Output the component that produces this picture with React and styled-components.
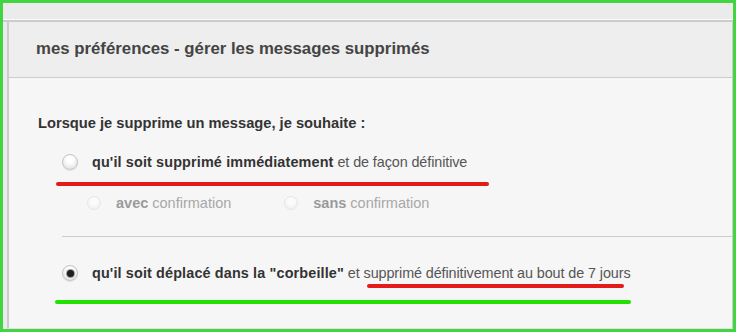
import React from "react";
import styled, { createGlobalStyle } from "styled-components";

const GlobalStyle = createGlobalStyle`
  html, body {
    margin: 0;
    padding: 0;
    background: #ebebeb;
  }
  * {
    box-sizing: border-box;
  }
`;

const Frame = styled.div`
  width: 736px;
  height: 332px;
  border: 3px solid #41d641;
  background: #ebebeb;
  display: flex;
  flex-direction: column;
  font-family: "Liberation Sans", Arial, sans-serif;
  overflow: hidden;
`;

const TopStrip = styled.div`
  height: 17px;
  flex-shrink: 0;
  background: #ebebeb;
  border-bottom: 1px solid #fafafa;
  box-shadow: 0 2px 0 #cccccc;
  margin-bottom: 2px;
`;

const Panel = styled.div`
  flex: 1;
  margin-left: 4px;
  border-left: 2px solid #cccccc;
  border-right: 1px solid #cccccc;
  border-bottom: 1px solid #e2e2e2;
  display: flex;
  flex-direction: column;
`;

const Header = styled.div`
  height: 56px;
  flex-shrink: 0;
  background: #eeeeee;
  border-bottom: 1px solid #cccccc;
  display: flex;
  align-items: center;
  padding: 0 0 1px 27px;
  h2 {
    margin: 0;
    font-size: 16.8px;
    font-weight: bold;
    color: #444444;
  }
`;

const Body = styled.div`
  flex: 1;
  background: #f6f6f6;
  padding: 37px 0 0 29px;
  display: flex;
  flex-direction: column;
`;

const Question = styled.p`
  margin: 0;
  line-height: 16px;
  font-size: 14.7px;
  font-weight: bold;
  color: #333333;
`;

const OptionRow = styled.label`
  display: flex;
  align-items: center;
  height: 20px;
  margin-top: ${(p) => p.$top}px;
  margin-left: 24px;
  gap: 14px;
  font-size: 14.4px;
  letter-spacing: -0.1px;
  color: #555555;
  b {
    color: #333333;
    letter-spacing: 0.14px;
  }
`;

const SubRow = styled.div`
  display: flex;
  align-items: center;
  height: 16px;
  margin-top: 9px;
  margin-left: 49px;
  gap: 53px;
`;

const SubOption = styled.label`
  display: flex;
  align-items: center;
  gap: 15px;
  font-size: 14.5px;
  color: #a8a8a8;
  b {
    color: #9a9a9a;
  }
`;

const Radio = styled.span`
  position: relative;
  flex-shrink: 0;
  width: ${(p) => (p.$small ? 14 : 16)}px;
  height: ${(p) => (p.$small ? 14 : 16)}px;
  border-radius: 50%;
  border: 1px solid ${(p) => (p.$disabled ? "#e6e6e6" : "#c4c4c4")};
  background: ${(p) =>
    p.$disabled
      ? "radial-gradient(circle at 50% 35%, #fbfbfb 30%, #ececec 100%)"
      : "radial-gradient(circle at 50% 35%, #ffffff 25%, #dadada 100%)"};
  box-shadow: ${(p) => (p.$disabled ? "none" : "0 1px 1px rgba(0,0,0,0.08)")};
  &::after {
    content: "";
    display: ${(p) => (p.$checked ? "block" : "none")};
    position: absolute;
    left: 50%;
    top: 50%;
    width: 7px;
    height: 7px;
    margin: -3.5px 0 0 -3.5px;
    border-radius: 50%;
    background: #1e1e1e;
    box-shadow: 0 0 0 1px #9a9a9a;
  }
`;

const Mark = styled.div`
  height: 4px;
  border-radius: 2px;
  background: ${(p) => p.$color};
  width: ${(p) => p.$width}px;
  margin-top: ${(p) => p.$top}px;
  margin-left: ${(p) => p.$left}px;
`;

const Divider = styled.hr`
  margin: 25px 0 0 24px;
  border: 0;
  border-top: 1px solid #cccccc;
  height: 0;
`;

const Underlined = styled.span`
  position: relative;
  &::after {
    content: "";
    position: absolute;
    left: 3px;
    right: 7px;
    top: calc(100% + 3px);
    height: 4px;
    border-radius: 2px;
    background: #e31b1b;
  }
`;

export default function App() {
  return (
    <>
      <GlobalStyle />
      <Frame>
        <TopStrip />
        <Panel>
          <Header>
            <h2>mes préférences - gérer les messages supprimés</h2>
          </Header>
          <Body>
            <Question>Lorsque je supprime un message, je souhaite :</Question>
            <OptionRow $top={21}>
              <Radio />
              <span>
                <b>qu'il soit supprimé immédiatement</b> et de façon définitive
              </span>
            </OptionRow>
            <Mark $color="#e31b1b" $width={433} $top={10} $left={18} />
            <SubRow>
              <SubOption>
                <Radio $small $disabled />
                <span>
                  <b>avec</b> confirmation
                </span>
              </SubOption>
              <SubOption>
                <Radio $small $disabled />
                <span>
                  <b>sans</b> confirmation
                </span>
              </SubOption>
            </SubRow>
            <Divider />
            <OptionRow $top={26}>
              <Radio $checked />
              <span>
                <b>qu'il soit déplacé dans la "corbeille"</b> et{" "}
                <Underlined>supprimé définitivement au bout de 7 jours</Underlined>
              </span>
            </OptionRow>
            <Mark $color="#22e000" $width={576} $top={17} $left={17} />
          </Body>
        </Panel>
      </Frame>
    </>
  );
}
